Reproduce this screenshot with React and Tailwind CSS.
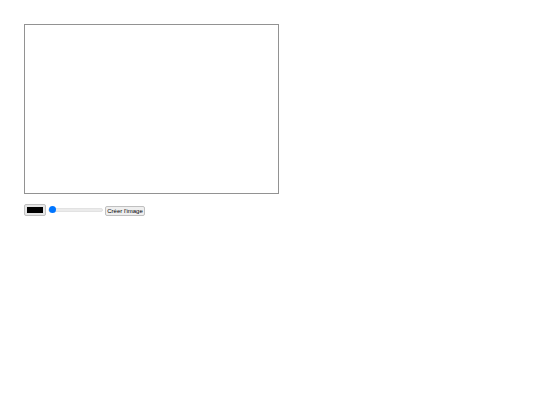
import { useEffect, useRef, useState } from 'react';

export default function App() {
    const canvasRef = useRef(null);
    const drawing = useRef(false);
    const [color, setColor] = useState('#000000');
    const [size, setSize] = useState(1);

    useEffect(() => {
        const canvas = canvasRef.current;
        canvas.width = canvas.clientWidth;
        canvas.height = canvas.clientHeight;
    }, []);

    const startDrawing = (e) => {
        const ctx = canvasRef.current.getContext('2d');
        drawing.current = true;
        ctx.beginPath();
        ctx.moveTo(e.nativeEvent.offsetX, e.nativeEvent.offsetY);
    };

    const draw = (e) => {
        if (!drawing.current) return;
        const ctx = canvasRef.current.getContext('2d');
        ctx.strokeStyle = color;
        ctx.lineWidth = size;
        ctx.lineCap = 'round';
        ctx.lineTo(e.nativeEvent.offsetX, e.nativeEvent.offsetY);
        ctx.stroke();
    };

    const stopDrawing = () => {
        drawing.current = false;
    };

    const saveImage = () => {
        const link = document.createElement('a');
        link.download = 'image.png';
        link.href = canvasRef.current.toDataURL();
        link.click();
    };

    return (
        <main className="p-6 font-['Liberation_Sans',Arial,sans-serif]">
            <canvas
                ref={canvasRef}
                onMouseDown={startDrawing}
                onMouseMove={draw}
                onMouseUp={stopDrawing}
                onMouseLeave={stopDrawing}
                className="block aspect-3/2 w-full max-w-[255px] border border-[#929292]"
            />

            {/* Tools */}
            <div className="mt-2.5 flex items-start gap-0.5">
                <input
                    type="color"
                    aria-label="Couleur"
                    value={color}
                    onChange={(e) => setColor(e.target.value)}
                    className="h-3 w-[22px] appearance-none rounded-[2px] border border-[#c0c0c0] bg-[#e6e6e6] px-px py-0.5 [&::-webkit-color-swatch]:border-0 [&::-webkit-color-swatch-wrapper]:px-px [&::-webkit-color-swatch-wrapper]:py-0"
                />
                <input
                    type="range"
                    aria-label="Épaisseur"
                    min="1"
                    max="50"
                    value={size}
                    onChange={(e) => setSize(Number(e.target.value))}
                    className="h-3 w-[55px] appearance-none bg-transparent [&::-webkit-slider-runnable-track]:h-1 [&::-webkit-slider-runnable-track]:rounded-full [&::-webkit-slider-runnable-track]:border [&::-webkit-slider-runnable-track]:border-[#e2e2e2] [&::-webkit-slider-runnable-track]:bg-[#ebebeb] [&::-webkit-slider-thumb]:-mt-[3px] [&::-webkit-slider-thumb]:size-[7px] [&::-webkit-slider-thumb]:appearance-none [&::-webkit-slider-thumb]:rounded-full [&::-webkit-slider-thumb]:bg-[#0075ff]"
                />
                <button
                    type="button"
                    onClick={saveImage}
                    className="mt-0.5 h-[10px] w-10 rounded-[2px] border border-[#c0c0c0] bg-[#efefef] text-center text-[6px] leading-[8px] whitespace-nowrap text-black"
                >
                    Créer l'image
                </button>
            </div>
        </main>
    );
}
